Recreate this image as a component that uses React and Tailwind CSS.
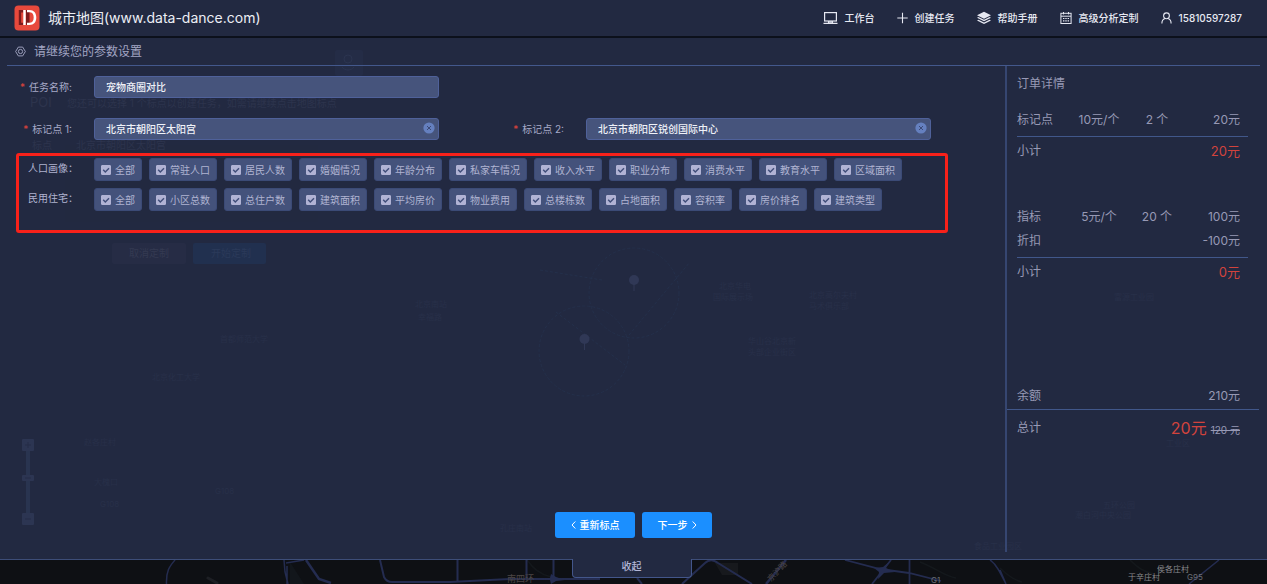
import { useState } from "react";

const navItems = [
  { icon: "desktop", label: "工作台" },
  { icon: "plus", label: "创建任务" },
  { icon: "layers", label: "帮助手册" },
  { icon: "calendar", label: "高级分析定制" },
  { icon: "user", label: "15810597287" },
];

const groups = [
  {
    name: "人口画像",
    options: [
      "全部",
      "常驻人口",
      "居民人数",
      "婚姻情况",
      "年龄分布",
      "私家车情况",
      "收入水平",
      "职业分布",
      "消费水平",
      "教育水平",
      "区域面积",
    ],
  },
  {
    name: "民用住宅",
    options: [
      "全部",
      "小区总数",
      "总住户数",
      "建筑面积",
      "平均房价",
      "物业费用",
      "总楼栋数",
      "占地面积",
      "容积率",
      "房价排名",
      "建筑类型",
    ],
  },
];

// faint place names of the map under the panel
const mapLabels = [
  { x: 415, y: 307, text: "北京南站" },
  { x: 418, y: 320, text: "幸福路" },
  { x: 220, y: 342, text: "首都师范大学" },
  { x: 152, y: 380, text: "北京化工大学" },
  { x: 719, y: 289, text: "北京华电" },
  { x: 713, y: 300, text: "国际展示场" },
  { x: 809, y: 298, text: "北京高尔夫村" },
  { x: 809, y: 309, text: "马术俱乐部" },
  { x: 748, y: 344, text: "华山谷北京新" },
  { x: 748, y: 355, text: "头部企业街区" },
  { x: 1114, y: 300, text: "富源工业园" },
  { x: 1103, y: 508, text: "五环公园" },
  { x: 1075, y: 518, text: "潮白河中央公园" },
  { x: 1166, y: 446, text: "工业区" },
  { x: 84, y: 445, text: "赵各庄村" },
  { x: 94, y: 485, text: "大槐口" },
  { x: 100, y: 507, text: "G108" },
  { x: 215, y: 494, text: "G108" },
  { x: 500, y: 531, text: "孔庄南站" },
  { x: 974, y: 549, text: "食品工业园区" },
];

function NavIcon({ name }) {
  if (name === "desktop") {
    return (
      <svg width="15" height="14" viewBox="0 0 15 14" fill="none" stroke="currentColor">
        <rect x="1.6" y="1.6" width="11.8" height="8.4" strokeWidth="1.2" />
        <path d="M5.5 10v2M9.5 10v2M.5 12.4h14" strokeWidth="1.1" />
        <path d="M6 11h3" strokeWidth="1.4" />
      </svg>
    );
  }
  if (name === "plus") {
    return (
      <svg width="11" height="14" viewBox="0 0 11 14" fill="none" stroke="currentColor">
        <path d="M5.5 1.8v10.4M.3 7h10.4" strokeWidth="1.1" />
      </svg>
    );
  }
  if (name === "layers") {
    return (
      <svg width="14" height="14" viewBox="0 0 14 14" fill="currentColor">
        <path d="M7 .8 14 4.3 7 7.8 0 4.3z" />
        <path d="M1.5 6 0 6.8l7 3.5 7-3.5-1.5-.8L7 8.8z" />
        <path d="M1.5 8.7 0 9.5 7 13l7-3.5-1.5-.8L7 11.5z" />
      </svg>
    );
  }
  if (name === "calendar") {
    return (
      <svg width="12" height="14" viewBox="0 0 12 14" fill="none" stroke="currentColor">
        <rect x=".9" y="2.3" width="10.2" height="10.2" />
        <path d="M1 5.2h10M3.5 1v2.4M8.5 1v2.4" />
        <path d="M3 7.5h6M3 9.8h6" strokeWidth="1.2" strokeDasharray="1.4 .9" />
      </svg>
    );
  }
  return (
    <svg width="11" height="14" viewBox="0 0 11 14" fill="none" stroke="currentColor" strokeWidth="1.1">
      <circle cx="5.5" cy="4.8" r="2.9" />
      <path d="M.9 12.6c0-2.8 1.3-4.4 3-5M10.1 12.6c0-2.8-1.3-4.4-3-5" />
    </svg>
  );
}

function Logo() {
  return (
    <svg width="26" height="26" viewBox="0 0 26 26" className="shrink-0">
      <rect x=".5" y=".5" width="25" height="25" rx="4" fill="#e8493c" />
      <path d="M9 5H4.8v15H9v-2.3H7.2V7.4H9z" fill="#7c1a1c" />
      <path d="M12 5h3.5v15H12z" fill="#7c1a1c" />
      <path
        fillRule="evenodd"
        d="M13 5h2.500c4.300 0 6.800 2.900 6.800 7.500S19.800 20 15.500 20H13v-2.200h2.300c2.900 0 4.400-1.900 4.400-5.300s-1.500-5.300-4.400-5.300H13z"
        fill="#fff"
      />
      <path d="M9.300 5h2.400v15H9.300z" fill="#fff" />
    </svg>
  );
}

function Header() {
  return (
    <header className="flex h-[38px] items-center border-b-2 border-[#0c101b] pl-3.5 pr-[25px]">
      <Logo />
      <h1 className="ml-2 text-sm text-[#eceef5]">
        城市地图(www.data-dance.com)
      </h1>
      <nav className="ml-auto flex items-center gap-[22px]">
        {navItems.map((item) => (
          <a
            key={item.label}
            href="#"
            className="flex items-center gap-[7px] text-[10px] font-medium leading-4 text-[#e6e8f2]"
          >
            <NavIcon name={item.icon} />
            {item.label}
          </a>
        ))}
      </nav>
    </header>
  );
}

function TextField({ id, label, value, clearable }) {
  const [text, setText] = useState(value);

  return (
    <div className="flex items-center">
      <label
        htmlFor={id}
        className="mr-[22px] w-[72px] shrink-0 text-right text-[10px] leading-4 text-[#a6a9c8]"
      >
        <span className="mr-1 text-[#e0443c]">*</span>
        {label}:
      </label>
      <div className="relative mr-[53px] flex-1">
        <input
          id={id}
          type="text"
          value={text}
          onChange={(e) => setText(e.target.value)}
          className="block h-[22px] w-full rounded-[3px] border border-[#4f619a] bg-[#46547c] px-[11px] pb-0.5 text-[10px] font-medium text-[#f0f2f8] outline-none"
        />
        {clearable && (
          <button
            type="button"
            aria-label="清除"
            onClick={() => setText("")}
            className="absolute right-1 top-1"
          >
            <svg width="12" height="12" viewBox="0 0 12 12" className="block">
              <circle cx="6" cy="6" r="5.6" fill="#6580bf" />
              <path d="M4 4l4 4M8 4l-4 4" stroke="#3c4a77" />
            </svg>
          </button>
        )}
      </div>
    </div>
  );
}

function Chip({ label }) {
  return (
    <label className="flex h-[23px] items-center gap-1 rounded-[3px] border border-[#3b4a76] bg-[#44527b] px-1.5 text-[10px] leading-4 text-[#b0b4d2]">
      <span className="relative block size-2.5">
        <input
          type="checkbox"
          defaultChecked
          className="peer block size-2.5 appearance-none rounded-[1px] border border-[#b1b3d4] checked:bg-[#b1b3d4]"
        />
        <svg
          viewBox="0 0 10 10"
          className="pointer-events-none absolute inset-0 hidden size-2.5 peer-checked:block"
          fill="none"
          stroke="#3f4d78"
          strokeWidth="1.4"
        >
          <path d="M2.2 4.8 4.3 7 8 3.2" />
        </svg>
      </span>
      {label}
    </label>
  );
}

function Subtotal({ amount }) {
  return (
    <div className="mr-[19px] flex h-7 items-center justify-between pr-2">
      <span>小计</span>
      <span className="text-[13px] text-[#d2433d]">{amount}</span>
    </div>
  );
}

function OrderTable({ rows }) {
  return (
    <div className="mr-[19px] border-b border-[#41578a] pb-1">
      <table className="w-full table-fixed">
        <tbody>
          {rows.map((row) => (
            <tr key={row.name} className="h-6">
              <th scope="row" className="w-[52px] text-left font-normal">
                {row.name}
              </th>
              <td className="w-[60px] text-center">{row.price}</td>
              <td className="w-[56px] text-center">{row.count}</td>
              <td className="pr-2 text-right">{row.total}</td>
            </tr>
          ))}
        </tbody>
      </table>
    </div>
  );
}

function OrderDetail() {
  return (
    <aside className="mb-[7px] w-[262px] shrink-0 border-l-2 border-[#364671] text-xs leading-4 text-[#9799b5]">
      <div className="pl-2.5">
        <h2 className="pt-2.5">订单详情</h2>
        <div className="pt-4">
          <OrderTable
            rows={[{ name: "标记点", price: "10元/个", count: "2 个", total: "20元" }]}
          />
          <Subtotal amount="20元" />
        </div>
        <div className="pt-10">
          <OrderTable
            rows={[
              { name: "指标", price: "5元/个", count: "20 个", total: "100元" },
              { name: "折扣", price: "", count: "", total: "-100元" },
            ]}
          />
          <Subtotal amount="0元" />
        </div>
      </div>
      <div className="mr-2 mt-24 flex h-7 items-center justify-between border-b border-[#41578a] pl-2.5 pr-[19px]">
        <span>余额</span>
        <span>210元</span>
      </div>
      <div className="mr-2 flex h-9 items-center justify-between pl-2.5 pr-[19px]">
        <span>总计</span>
        <span className="flex items-baseline gap-1">
          <strong className="text-base font-normal text-[#d2433d]">20元</strong>
          <del className="text-[10px]">120 元</del>
        </span>
      </div>
    </aside>
  );
}

// What shines through the translucent panel: search box, labels, pins, zoom bar
function MapBackdrop() {
  return (
    <div aria-hidden="true" className="absolute inset-0 overflow-hidden">
      <svg width="1267" height="584" viewBox="0 0 1267 584">
        <rect x="14" y="66" width="349" height="206" fill="#222941" />
        <rect x="65" y="145" width="253" height="77" fill="#222940" />
        <rect x="335" y="50" width="28" height="26" rx="2" fill="#242c46" />
        <g fill="none" stroke="#2b3450">
          <circle cx="348" cy="59" r="4" />
          <path d="M342 67c3 4 9 4 12 0" />
        </g>
        <rect x="112" y="243" width="74" height="21" rx="2" fill="#262c45" />
        <rect x="193" y="243" width="73" height="21" rx="2" fill="#21304f" />
        <g fill="none" stroke="#24304b" strokeDasharray="3 2">
          <circle cx="634" cy="293" r="45" />
          <circle cx="584" cy="351" r="45" />
          <path d="M629 335 690 262M540 270 602 280M556 312 625 365" />
        </g>
        <g fill="#303856">
          <circle cx="634" cy="280" r="5" />
          <path d="M633.5 284h1v7h-1z" />
          <circle cx="584.5" cy="339" r="5" />
          <path d="M584 343h1v7h-1z" />
        </g>
        <path d="M26 451h4v62h-4z" fill="#293450" />
        <g fill="#2c3552">
          <rect x="22" y="439" width="12" height="12" rx="1" />
          <rect x="22" y="475" width="12" height="6" rx="1" />
          <rect x="22" y="513" width="12" height="12" rx="1" />
        </g>
        <path d="M25 445h6M28 442v6M25 478h6M25 519h6" stroke="#242c46" />
        <g fill="#2d344d" fontSize="10">
          <text x="30" y="107" fontSize="13">POI</text>
          <text x="67" y="107">您还可以选择 1 个标点以创建任务，如需请继续点击地图标点</text>
          <text x="32" y="149">标点</text>
          <text x="76" y="149">北京市朝阳区太阳宫</text>
          <text x="129" y="257" fill="#343a52">取消定制</text>
          <text x="211" y="257" fill="#2b3a5a">开始定制</text>
        </g>
        <g fill="#283049" fontSize="8">
          {mapLabels.map((l) => (
            <text key={l.x + "-" + l.y} x={l.x} y={l.y}>
              {l.text}
            </text>
          ))}
        </g>
      </svg>
    </div>
  );
}

function MapStrip() {
  return (
    <svg
      width="1267"
      height="24"
      viewBox="0 0 1267 24"
      className="absolute left-0 top-0"
      aria-hidden="true"
    >
      <path d="M715 3h23v12h-16z" fill="#17191d" />
      <path d="M290 2l14 22h-14z" fill="#12161b" />
      <g fill="none" stroke="#14181c" strokeWidth="1.5">
        <path d="M527 0c6 8 12 14 24 17M920 2c16 6 24 14 36 16M1130 0c8 8 14 12 24 14M1000 8c8 8 14 12 22 14" />
      </g>
      <path d="M208 18l9 5" stroke="#1d1f24" strokeWidth="3" strokeLinecap="round" />
      <g fill="none" stroke="#242c50" strokeWidth="1.5">
        <path d="M175 0c-5 6-9 10-8.5 24" />
        <path d="M284 0l1 12 3 12M286 3l18-3M287 6v18" />
        <path d="M306 0l13 19 12 4" strokeWidth="2.5" />
        <path d="M380 0l4 17c2 4 4 5 8 5h58l60-3 90 0" strokeWidth="2" />
        <path d="M457.5 0v22M526.5 0v20M553.5 0v22" strokeWidth="2" />
        <path d="M637 18l5 6M682 24l23-21c3-3 8-4 13 0l34 21" strokeWidth="2" />
        <path d="M786 0l-20 24" strokeWidth="2.5" />
        <path d="M845 0l35 9 29 4 32 8M891 0l-19 24M909.5 0v24" strokeWidth="1.8" />
        <path d="M990 0c6 4 10 12 16 24M1219 0l-30 24M1000 10l6 14" />
      </g>
      <path d="M551 14l5 3 9 3-9 1-5 3-1-4-6-1 6-1z" fill="#242c50" />
      <path d="M889 2l-3 6 9 4-11 1-6 6 1-7-5-4 9-1z" fill="#242c50" />
      <g fill="#8a8a8e" fontSize="8">
        <text x="1157" y="12">侯各庄村</text>
        <text x="1128" y="20">于辛庄村</text>
        <text x="1187" y="20" fill="#6c6e74">G95</text>
        <text x="931" y="23" fill="#6c6e74">G1</text>
      </g>
      <g fill="#4c4645" fontSize="9">
        <text x="507" y="22">南四环</text>
        <text x="771" y="22" fontSize="8" transform="rotate(-47 771 22)">京沪路</text>
      </g>
    </svg>
  );
}

export default function App() {
  return (
    <div className="relative flex min-h-screen flex-col bg-[#222941] font-['Inter','Noto_Sans_CJK_SC',sans-serif]">
      <MapBackdrop />

      <div className="relative flex flex-1 flex-col">
        <Header />

        <div className="mx-[7px] flex h-7 items-center gap-2 border-b border-[#43588c] pl-2 text-[#a3a6c4]">
          <svg width="11" height="11" viewBox="0 0 12 12" fill="none" stroke="currentColor">
            <path d="M3.6 1.2h4.8L11.3 6l-2.9 4.8H3.600L.7 6z" />
            <circle cx="6" cy="6" r="2.3" />
          </svg>
          <p className="text-xs leading-4">请继续您的参数设置</p>
        </div>

        {/* Form + order */}
        <div className="flex flex-1">
          <form className="flex min-w-0 flex-1 flex-col pt-2.5" onSubmit={(e) => e.preventDefault()}>
            <div className="mr-[21px] grid grid-cols-2 gap-y-5">
              <TextField id="task" label="任务名称" value="宠物商圈对比" />
              <div />
              <TextField id="point1" label="标记点 1" value="北京市朝阳区太阳宫" clearable />
              <TextField id="point2" label="标记点 2" value="北京市朝阳区锐创国际中心" clearable />
            </div>

            <div className="ml-4 mr-[57px] mt-[13px] flex flex-col gap-[7px] rounded-[3px] border-[3px] border-[#f8211a] pb-[19px] pl-[9px] pt-0.5">
              {groups.map((group) => (
                <fieldset key={group.name} className="flex">
                  <legend className="float-left w-[66px] shrink-0 pt-0.5 text-[10px] leading-4 text-[#b0b3d0]">
                    {group.name}：
                  </legend>
                  <div className="flex flex-wrap gap-[7px]">
                    {group.options.map((option) => (
                      <Chip key={option} label={option} />
                    ))}
                  </div>
                </fieldset>
              ))}
            </div>

            <div className="mb-[21px] mt-auto flex justify-center gap-[7px] pl-[262px] pt-6">
              <button
                type="button"
                className="flex h-[26px] w-20 items-center justify-center gap-1 rounded-[3px] bg-[#1b8fff] text-[10px] font-medium text-white"
              >
                <svg width="5" height="8" viewBox="0 0 5 8" fill="none" stroke="currentColor">
                  <path d="M4.3.5 1 4l3.3 3.5" />
                </svg>
                重新标点
              </button>
              <button
                type="submit"
                className="flex h-[26px] w-[70px] items-center justify-center gap-1 rounded-[3px] bg-[#1b8fff] text-[10px] font-medium text-white"
              >
                下一步
                <svg width="5" height="8" viewBox="0 0 5 8" fill="none" stroke="currentColor">
                  <path d="M.7.5 4 4 .7 7.5" />
                </svg>
              </button>
            </div>
          </form>

          <OrderDetail />
        </div>
      </div>

      {/* Uncovered map with the collapse tab */}
      <footer className="relative h-[25px] border-t border-[#3d4d78] bg-[#0e1014]">
        <div className="absolute inset-0 overflow-hidden">
          <MapStrip />
        </div>
        <div className="relative -mt-px flex justify-center pr-1">
          <button
            type="button"
            className="h-[19px] w-[120px] rounded-b-[4px] border border-t-0 border-[#43568a] bg-[#222941] pb-1 text-[10px] font-medium leading-[14px] text-[#b4b7d8]"
          >
            收起
          </button>
        </div>
      </footer>
    </div>
  );
}
